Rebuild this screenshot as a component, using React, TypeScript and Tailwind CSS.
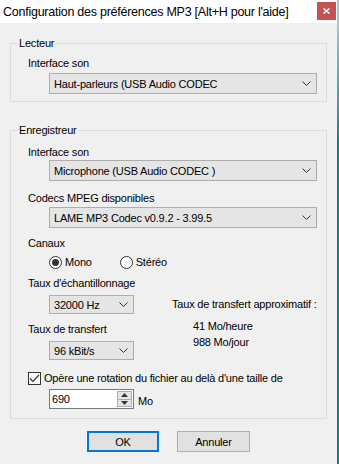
import React from "react";

function Chevron() {
  return (
    <svg width="9" height="5" viewBox="0 0 9 5" className="shrink-0">
      <path d="M0.5 0.5 L4.5 4.5 L8.5 0.5" fill="none" stroke="#333" strokeWidth="1" />
    </svg>
  );
}

function Combo({ value, className }: { value: string; className: string }) {
  return (
    <div
      className={
        "flex items-center justify-between border border-[#adadad] bg-[#e5e5e5] pl-[4px] pr-[5px] " +
        className
      }
    >
      <span className="whitespace-nowrap">{value}</span>
      <Chevron />
    </div>
  );
}

function Radio({ label, checked }: { label: string; checked?: boolean }) {
  return (
    <div className="flex items-center gap-[3px]">
      <div className="flex h-[13px] w-[13px] items-center justify-center rounded-full border border-[#333] bg-white">
        {checked && <div className="h-[7px] w-[7px] rounded-full bg-[#333]" />}
      </div>
      <span>{label}</span>
    </div>
  );
}

export default function App() {
  return (
    <div className="flex h-[464px] w-[339px] font-['Liberation_Sans',Arial,sans-serif] text-[11px] leading-[14px] tracking-[-0.2px] text-black">
      <div className="flex flex-1 flex-col bg-[#f0f0f0]">
        {/* title bar */}
        <div className="flex h-[23px] items-start justify-between bg-white pl-[3px] pr-[1px]">
          <span className="self-center whitespace-nowrap text-[12.5px] tracking-[-0.25px]">
            Configuration des préférences MP3 [Alt+H pour l'aide]
          </span>
          <div className="mt-[2px] flex h-[18px] w-[19px] items-center justify-center bg-[#c75050]">
            <svg width="7" height="6" viewBox="0 0 7 6">
              <path d="M0.5 0.5 L6.5 5.5 M6.5 0.5 L0.5 5.5" stroke="white" strokeWidth="1.6" />
            </svg>
          </div>
        </div>

        <div className="flex flex-col px-[10px]">
          {/* Lecteur */}
          <fieldset className="mt-[13px] border border-[#dcdcdc] px-0 pb-[7px]">
            <legend className="ml-[7px] px-[1px] leading-[14px]">Lecteur</legend>
            <div className="flex flex-col pl-[17px] pr-[9px] pt-[6px]">
              <span>Interface son</span>
              <Combo value="Haut-parleurs (USB Audio CODEC" className="ml-[21px] mt-[3px] h-[21px]" />
            </div>
          </fieldset>

          {/* Enregistreur */}
          <fieldset className="mt-[21px] border border-[#dcdcdc] px-0 pb-[9px]">
            <legend className="ml-[7px] px-[1px] leading-[14px]">Enregistreur</legend>
            <div className="flex flex-col pl-[17px] pr-[9px] pt-[8px]">
              <span>Interface son</span>
              <Combo value="Microphone (USB Audio CODEC )" className="ml-[21px] mt-[1px] h-[21px]" />
              <span className="mt-[10px]">Codecs MPEG disponibles</span>
              <Combo value="LAME MP3 Codec v0.9.2 - 3.99.5" className="ml-[21px] mt-[2px] h-[21px]" />
              <span className="mt-[8px]">Canaux</span>
              <div className="ml-[21px] mt-[5px] flex gap-[28px]">
                <Radio label="Mono" checked />
                <Radio label="Stéréo" />
              </div>

              <div className="mt-[7px] flex">
                <div className="flex w-[144px] flex-col">
                  <span>Taux d'échantillonnage</span>
                  <Combo value="32000 Hz" className="ml-[21px] mt-[5px] h-[19px] w-[85px]" />
                  <span className="mt-[8px]">Taux de transfert</span>
                  <Combo value="96 kBit/s" className="ml-[21px] mt-[5px] h-[19px] w-[85px]" />
                </div>
                <div className="mt-[21px] flex flex-col">
                  <span className="whitespace-nowrap">Taux de transfert approximatif :</span>
                  <span className="ml-[21px] mt-[8px]">41 Mo/heure</span>
                  <span className="ml-[21px] mt-[2px]">988 Mo/jour</span>
                </div>
              </div>

              <div className="mt-[11px] flex items-center gap-[3px]">
                <div className="flex h-[13px] w-[13px] items-center justify-center border border-[#333] bg-white">
                  <svg width="11" height="9" viewBox="0 0 11 9">
                    <path d="M1 4.5 L4 7.5 L10 1" fill="none" stroke="#333" strokeWidth="1.2" />
                  </svg>
                </div>
                <span className="whitespace-nowrap">Opère une rotation du fichier au delà d'une taille de</span>
              </div>

              <div className="ml-[21px] mt-[4px] flex items-center gap-[4px]">
                <div className="flex h-[20px] w-[85px] items-center border border-[#7a7a7a] bg-white pl-[2px] pr-[1px]">
                  <span className="flex-1">690</span>
                  <div className="flex h-[16px] w-[15px] flex-col">
                    <div className="flex flex-1 items-center justify-center border border-[#acacac] bg-[#e5e5e5]">
                      <svg width="7" height="4" viewBox="0 0 7 4">
                        <path d="M0 4 L3.5 0 L7 4 Z" fill="#333" />
                      </svg>
                    </div>
                    <div className="flex flex-1 items-center justify-center border border-t-0 border-[#acacac] bg-[#e5e5e5]">
                      <svg width="7" height="4" viewBox="0 0 7 4">
                        <path d="M0 0 L3.5 4 L7 0 Z" fill="#333" />
                      </svg>
                    </div>
                  </div>
                </div>
                <span className="mt-[3px]">Mo</span>
              </div>
            </div>
          </fieldset>

          {/* buttons */}
          <div className="mt-[12px] flex justify-center gap-[18px]">
            <button className="h-[21px] w-[72px] border-2 border-[#0078d7] bg-[#e1e1e1]">OK</button>
            <button className="h-[21px] w-[73px] border border-[#adadad] bg-[#e1e1e1]">Annuler</button>
          </div>
        </div>
      </div>
      <div className="w-[2px] bg-linear-to-b from-[#93cde0] from-5% to-[#00878c] to-30%" />
    </div>
  );
}
